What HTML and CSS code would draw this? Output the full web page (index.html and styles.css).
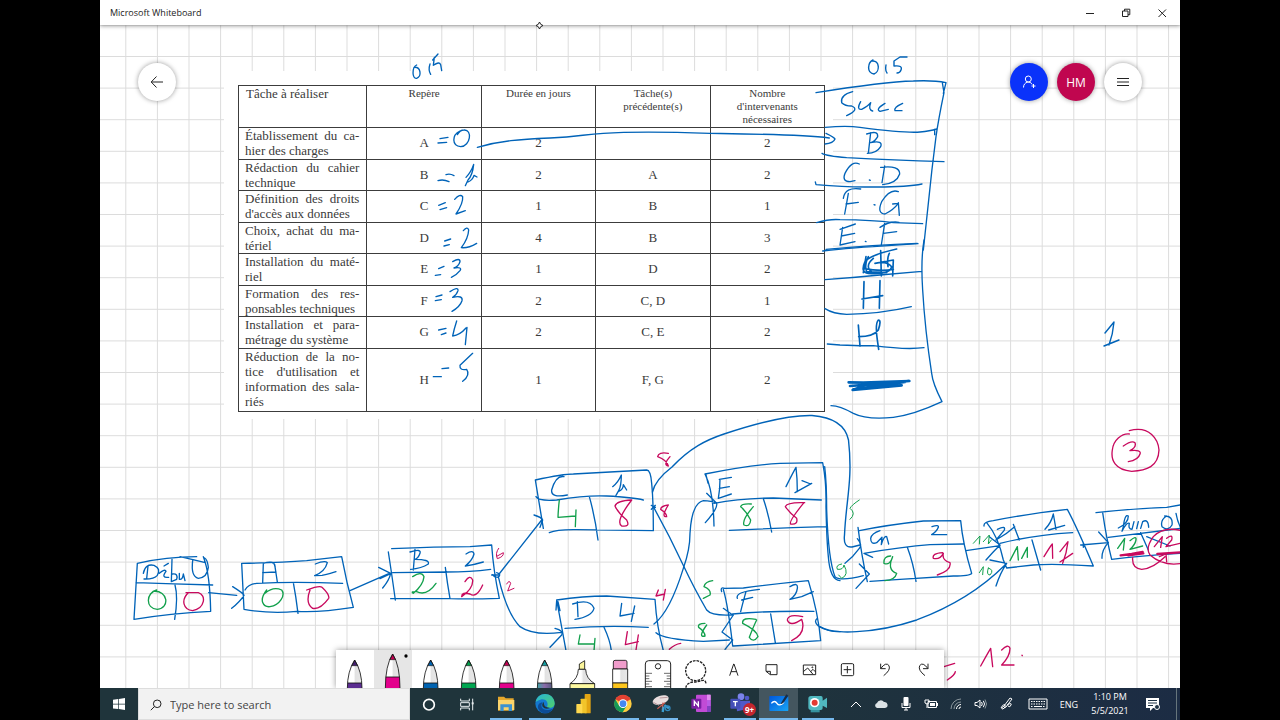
FILE: index.html
```html
<!DOCTYPE html>
<html lang="fr">
<head>
<meta charset="utf-8">
<title>Microsoft Whiteboard</title>
<link rel="stylesheet" href="styles.css">
</head>
<body>
<div class="desktop">
<header class="titlebar">
  <span class="app-name">Microsoft Whiteboard</span>
  <div class="window-controls">
    <button class="window-button" aria-label="Minimize"><svg width="10" height="10" viewBox="0 0 10 10"><path d="M1 5.5h8"/></svg></button>
    <button class="window-button" aria-label="Restore"><svg width="10" height="10" viewBox="0 0 10 10"><path d="M1.5 3h5.500v5.500h-5.500zM3.500 3V1.200h5.300v5.500H7"/></svg></button>
    <button class="window-button" aria-label="Close"><svg width="10" height="10" viewBox="0 0 10 10"><path d="M1.500 1.500l7.500 7.500M9 1.500L1.500 9"/></svg></button>
  </div>
</header>

<main class="board">
  <svg class="grid" aria-hidden="true">
    <defs><pattern id="cell" x="25.300" y="31" width="31.600" height="31.600" patternUnits="userSpaceOnUse"><path d="M.5 0V31.600M0 .5H31.600" stroke="#dcdcdc" fill="none"/></pattern></defs>
    <rect width="100%" height="100%" fill="url(#cell)"/>
  </svg>

  <div class="sheet">
    <table class="tasks">
      <thead>
        <tr><th class="first">Tâche à réaliser</th><th>Repère</th><th>Durée en jours</th><th>Tâche(s)<br>précédente(s)</th><th>Nombre<br>d'intervenants<br>nécessaires</th></tr>
      </thead>
      <tbody>
        <tr><td><span class="full">Établissement du ca-</span><span>hier des charges</span></td><td>A</td><td>2</td><td></td><td>2</td></tr>
        <tr><td><span class="full">Rédaction du cahier</span><span>technique</span></td><td>B</td><td>2</td><td>A</td><td>2</td></tr>
        <tr><td><span class="full">Définition des droits</span><span>d'accès aux données</span></td><td>C</td><td>1</td><td>B</td><td>1</td></tr>
        <tr><td><span class="full">Choix, achat du ma-</span><span>tériel</span></td><td>D</td><td>4</td><td>B</td><td>3</td></tr>
        <tr><td><span class="full">Installation du maté-</span><span>riel</span></td><td>E</td><td>1</td><td>D</td><td>2</td></tr>
        <tr><td><span class="full">Formation des res-</span><span>ponsables techniques</span></td><td>F</td><td>2</td><td>C, D</td><td>1</td></tr>
        <tr><td><span class="full">Installation et para-</span><span>métrage du système</span></td><td>G</td><td>2</td><td>C, E</td><td>2</td></tr>
        <tr class="tall"><td><span class="full">Réduction de la no-</span><span class="full">tice d'utilisation et</span><span class="full">information des sala-</span><span>riés</span></td><td>H</td><td>1</td><td>F, G</td><td>2</td></tr>
      </tbody>
    </table>
  </div>

  <svg class="ink" width="1080" height="663" viewBox="100 25 1080 663" role="img" aria-label="Notes manuscrites et diagramme PERT">
    <g class="page">
      <path d="M873 60C868 62 866 73 874 74C880 72 880 60 872 61M886 65q-1 6 1 8M907 57h-7l-6 4v5q9-1 7 4q-1 3-4 3M1105 333L1114 322Q1113 334 1109 345M1104 346L1119 340"/>
      <path d="M652.500 492Q655 480 672 467C690 448 706 440 724 434C760 422 790 415 812 415.500Q844 418 848.500 440C853 480 846 500 844.500 535Q843 548 852 547L860 545"/>
    </g>
    <g transform="translate(100 0) scale(.33333)">
      <path d="M950 195C935 202 936 238 950 235C965 230 964 200 942 202M990 192Q984 210 992 223M1014 162L998 180M1003 172L1000 196Q1018 183 1022 194L1025 212"/>
    </g>
    <g transform="translate(230 80) scale(.33333)">
      <path d="M630 176L654 172M624 189L650 187M690 153C665 165 665 198 692 200C722 198 728 148 702 150Q690 150 682 164M624 302Q640 297 657 305M648 284Q660 280 672 287M708 292Q724 275 731 253Q728 285 714 300L706 317M714 306Q728 300 732 286L741 291"/>
      <path d="M626 376L646 368M630 389L650 383M674 358Q690 340 698 350Q700 370 678 402L706 392M644 483L662 477M642 498L658 494M700 452Q712 438 716 450Q715 475 694 503Q715 505 740 490"/>
    </g>
    <g transform="translate(230 240) scale(.33333)">
      <path d="M626 86L642 79M616 106L632 104M668 65Q690 52 690 65Q685 80 672 84Q698 80 690 92Q680 105 664 112M618 170L636 165M616 182L634 179M660 155Q685 138 684 152Q680 165 668 172Q700 165 696 182Q690 200 666 214"/>
      <path d="M626 270L648 265M634 284L648 279M680 243Q672 268 668 288Q690 285 708 264M711 262L706 314M636 386L656 384M610 410L634 410M728 340L690 376Q688 392 710 388Q722 405 698 424"/>
    </g>
    <g transform="translate(540 70) scale(.33333)">
      <path d="M-188 232C-120 212-60 208 30 204S130 193 190 190C300 183 450 188 510 190C650 192 780 193 868 204M858 190Q880 200 885 207Q880 220 855 222"/>
      <path d="M828 68C940 50 1040 35 1120 33Q1180 30 1218 38L1210 70M1207 38L1212 68Q1195 150 1188 200Q1175 300 1165 400L1150 540M856 172Q920 166 960 172Q1100 190 1140 186Q1170 183 1190 177M1184 178v16M846 250Q860 258 920 263Q1060 270 1212 275M826 336L828 344Q920 352 990 351Q1100 352 1146 342M830 458Q870 446 900 449Q1000 450 1060 458L1148 461M858 538Q1000 525 1132 520"/>
      <path d="M938 65Q900 75 905 98Q915 108 935 108Q960 118 920 137M962 95Q948 120 965 118Q985 108 992 98Q984 120 998 123M1035 100Q1005 118 1020 124L1045 118M1088 100Q1060 112 1065 122L1086 122M992 188L985 250M980 192Q1015 180 1013 200Q1005 215 992 218Q1030 210 1022 230Q1010 250 982 250"/>
      <path d="M958 282Q935 270 915 310Q905 335 930 335L945 332M988 330l3 1M1034 288L1026 338M1022 292Q1080 285 1079 312Q1070 340 1028 344M925 370Q920 400 914 432M910 385Q915 350 962 357M918 402L955 397M1002 404l3 1M1075 365Q1050 355 1025 395Q1010 430 1035 432Q1060 420 1075 400L1058 402M1075 398L1078 436"/>
      <path d="M908 472L900 525L945 515M900 478L946 462M904 498L944 490M976 514l2 1M1034 460L1024 525M1020 472Q1050 452 1077 457M1030 490L1070 485"/>
    </g>
    <g transform="translate(540 240) scale(.33333)">
      <path d="M1152 0Q1142 60 1148 150Q1155 270 1175 400Q1178 430 1206 485Q1120 525 1060 532Q980 540 940 520Q900 498 873 497M848 33Q950 22 1000 20L1134 11M855 119Q940 113 1020 105L1146 94M855 206Q880 222 920 223Q1020 222 1114 200M862 312L900 315Q960 318 1000 317Q1100 330 1152 323"/>
      <path class="bold" d="M1070 27Q990 45 975 65Q960 98 985 100Q1050 105 1055 80Q1040 62 1005 70L1060 60L1058 108M985 50Q972 75 980 95L1040 98M1022 32L1024 108M1000 55Q970 80 1000 100M970 85Q1020 95 1060 88M978 50L970 98M1048 40Q1040 55 1044 80M972 125L970 205M1020 122L1018 205M966 177L1028 167M955 255L960 318M956 290Q1000 290 1015 270Q1025 240 1015 240Q1005 250 1012 300L1016 328"/>
      <path class="scribble" d="M926 427L970 428L1108 423L930 438L1095 426L940 448L1085 436L938 450L980 434"/>
    </g>
    <g transform="translate(120 530) scale(.33333)">
      <path d="M52 100Q140 80 230 80M42 268L52 100M180 80Q215 88 256 98M42 268Q150 250 272 244M250 80Q270 130 272 244M48 158Q160 162 278 165M165 165Q175 200 164 268M84 108L80 146M70 130Q76 100 102 106Q124 116 112 136Q102 148 72 147M118 130Q135 115 138 124Q122 145 146 142M132 108L145 100M156 88L154 155M158 132Q175 130 170 148L154 155M178 130L178 148Q188 150 190 132L195 152M218 92Q212 140 235 145Q262 142 265 112Q262 88 254 84"/>
      <path d="M266 188L350 196M338 170Q370 190 372 196Q360 215 335 235M365 100Q480 98 560 92Q620 85 665 80Q680 160 700 232Q600 248 530 244Q450 252 372 238L365 100M375 180Q385 162 410 160Q520 154 668 160M520 158Q528 200 534 250M428 158L430 100Q465 90 465 110L472 156M428 128L468 126M586 102Q615 90 622 98Q615 125 584 137L606 136Q635 130 648 125"/>
      <path d="M690 182L808 130M776 112L812 130Q808 150 788 174M780 146L810 132M815 56Q950 50 1050 50L1115 45Q1120 120 1138 205Q1050 208 990 206L812 206M805 66Q815 130 826 210M818 128L980 126Q1050 126 1112 118M976 112Q982 160 990 206M870 66Q905 55 900 70Q895 85 885 88Q930 88 925 102Q905 115 872 118M885 58L880 120M1038 72Q1060 58 1062 72Q1058 90 1036 108Q1060 105 1090 96"/>
      <path class="green" d="M110 180C78 188 75 235 112 238C150 235 145 180 100 184M440 180C415 212 430 232 450 230C480 225 497 195 485 180Q460 168 435 190M878 140Q905 122 912 140Q910 165 880 190Q870 184 890 185Q920 200 948 160"/>
      <path class="pink" d="M205 188C182 210 190 240 218 242C255 235 260 195 235 188L198 188M560 180Q600 165 606 172Q630 195 626 205Q600 240 578 235Q555 220 570 180M1035 155Q1050 132 1058 150Q1060 175 1025 200Q1025 185 1050 192Q1070 205 1088 165"/>
      <path class="pink thin" d="M1136 55Q1125 70 1132 86Q1152 80 1150 68L1132 78M1160 162Q1168 148 1172 160L1163 183L1182 175"/>
    </g>
    <g transform="translate(490 440) scale(.33333)">
      <path d="M5 405L28 405M20 398Q35 402 25 412Q12 412 8 404M25 405L155 240M132 225Q155 232 158 240L150 262M25 410Q50 520 90 560Q130 588 215 577M195 565Q222 572 215 585L180 622"/>
      <path d="M136 120Q220 102 250 102L470 90Q482 90 485 130Q490 180 490 272Q350 270 260 269Q200 268 178 278M136 120L160 265M138 170Q145 184 200 180Q290 165 350 168Q430 172 460 180M298 170Q315 230 324 300M222 110Q198 105 185 150Q182 175 232 165M368 140Q384 128 394 105Q394 138 386 152L378 166M386 154Q400 148 400 134L410 150"/>
      <path d="M490 200Q540 290 582 380Q610 440 650 510Q665 528 725 525M484 196L496 202M484 208L496 196M200 480Q280 468 350 468L495 478Q500 560 520 632M200 480Q215 560 228 632M200 482L198 510M204 485L210 512M225 565Q350 555 475 562M342 562Q360 600 364 632M262 485L264 530M248 492Q300 475 312 505Q305 530 255 538M395 490L390 528L432 520M434 498L424 544"/>
      <path d="M492 552Q540 515 580 385Q600 330 600 280Q605 190 640 182Q665 183 680 190M650 160L680 190Q684 205 646 248M498 578Q520 598 640 604L718 600M730 525L696 576L728 600L705 628M645 102Q780 75 870 70L998 68Q1010 130 1008 200Q1010 300 1015 350Q1020 420 1050 422M645 102Q670 150 672 258M648 105l6 24M718 271Q850 265 1008 260M672 190Q750 175 850 174L994 180M820 176Q835 220 845 276M690 118Q690 150 685 175L724 162M688 118L724 112M688 145L718 140M888 140Q905 105 918 82Q922 115 922 155M915 158L965 130M936 122L962 132"/>
      <path d="M695 455Q690 440 704 445L760 444Q850 432 955 422Q985 520 992 602L730 618M700 448Q715 500 728 618M728 522Q830 512 972 514M842 522L856 608M768 455Q758 490 752 515M742 475Q735 455 808 448M755 480L788 472M900 440Q925 425 922 445Q920 465 900 478L935 470L970 455M700 505L728 525M982 535Q970 545 985 558Q1010 575 1050 575"/>
      <path class="green" d="M208 180Q205 205 204 232L256 228M258 210L256 260M270 585L265 612L312 612M315 595L312 632M784 192Q755 190 752 200Q770 215 782 240Q780 262 762 255Q755 240 790 200M668 422Q645 425 642 440Q665 450 660 465L640 475M645 550Q622 550 626 562Q645 575 645 588Q622 594 650 555M798 538Q755 530 758 550Q800 570 804 590Q790 610 778 592Q790 560 800 540"/>
      <path class="pink" d="M425 180Q380 182 375 198Q385 220 410 240Q422 262 395 258Q375 245 425 180M412 575L406 614L445 605M445 585L438 630M535 40Q505 35 503 50Q530 60 535 78Q518 75 540 50M535 195Q512 198 512 208Q530 220 530 230Q512 232 535 195M505 450L498 468L524 462M526 448L520 480M538 628Q555 612 572 610M944 188Q890 186 886 200Q900 220 920 235Q925 255 902 252Q895 245 942 188M938 530Q895 520 892 540Q900 562 935 538Q950 580 905 602"/>
    </g>
    <g transform="translate(820 410) scale(.33333)">
      <path d="M14 170Q20 220 20 300Q25 450 45 500Q60 515 130 497M118 462L148 492L108 535M112 386Q128 405 118 415Q100 440 75 460M118 362Q200 345 310 333L422 332Q428 400 455 490Q450 498 400 498L240 508L150 514M114 352Q125 440 142 515M132 430Q250 410 330 404L430 402M132 430L158 442M262 412Q280 460 288 514M180 362Q155 370 152 385Q152 405 170 398L186 382L184 404Q192 376 200 380L206 402M336 350Q357 343 355 352Q350 365 335 374L380 374"/>
      <path d="M60 665Q80 667 110 665Q200 660 290 630Q450 570 555 465M0 650Q24 664 60 665M510 450L560 460Q540 490 528 528M438 422L540 407M508 380L540 405Q515 430 498 450M492 348Q490 335 520 332Q620 312 742 298Q770 350 820 468Q700 460 640 465L560 474M500 338Q535 380 550 450L560 474M540 400Q640 375 758 368M636 390L662 480M532 358Q560 345 552 362L528 390Q560 372 584 350M580 343Q590 370 598 390M675 358Q694 338 700 312L708 358M686 360L734 346M782 405L865 398M790 400v12M836 366L865 398Q845 420 846 445"/>
      <path d="M828 308Q950 295 1040 292L1085 284M848 308Q860 390 875 448Q960 438 1085 430M865 382Q960 370 1085 355M962 368L985 420M980 380L1050 408M895 354Q925 340 925 318Q915 310 910 350L906 364Q920 335 928 340Q924 358 936 358L942 335M950 356L955 335M962 355L968 335Q985 325 986 352M1040 318Q1020 330 1026 350Q1045 365 1056 345Q1060 318 1034 318M1068 310Q1072 335 1085 360"/>
      <path class="green thin" d="M65 462Q46 465 52 478Q70 480 72 465Q88 495 65 505L56 495M118 270Q95 285 90 295Q110 310 90 328M460 400L480 378L478 402M490 395L508 375L505 402L514 390M478 488L490 470L488 494M505 474Q498 495 510 495Q524 480 505 474"/>
      <path class="green" d="M212 438Q190 438 192 460Q210 468 218 440Q200 480 230 490Q225 510 195 512M570 452L592 410L595 450M605 445L622 412L622 442M893 415L914 385L910 420M930 392Q950 375 948 390Q945 405 930 418L968 408"/>
      <path class="pink" d="M368 428Q335 430 340 445Q360 450 370 430Q365 450 390 458Q395 480 352 495M672 440Q690 410 697 402L698 445M720 425L744 395Q740 430 728 460M720 456L758 430M1003 410L1027 380L1022 412M1040 385Q1060 370 1055 390L1038 410L1080 400M1085 362Q1030 348 1000 380Q975 415 990 435Q1030 470 1085 460M938 442Q935 475 965 478Q1000 475 1035 440M1018 440L1038 432L1040 455M928 62C990 45 1015 90 1017 120C1015 170 980 182 935 184C885 180 872 150 877 120C880 90 905 70 928 72M910 108Q935 90 945 98Q950 112 930 122Q965 118 960 132Q955 150 925 155M482 768Q500 735 512 715L518 770M545 720Q565 700 570 715Q570 740 545 765L582 765M606 736l1 1M372 770L404 760M382 810Q405 795 406 785"/>
      <path class="pink heavy" d="M902 436L935 432L968 426M925 436L970 430M1012 432L1085 427"/>
    </g>
  </svg>

  <div class="top-actions">
    <button class="round" aria-label="Back"><svg width="14" height="14" viewBox="0 0 14 14"><path d="M13 7H1.500M6.500 1.500L1.200 7l5.300 5.500"/></svg></button>
    <div class="account">
      <button class="round invite" aria-label="Invite"><svg width="14" height="14" viewBox="0 0 14 14"><circle cx="6.300" cy="4" r="3"/><path d="M1.500 12.500c0-6 7-7 8.700-3M9.500 11h4M11.500 9v4"/></svg></button>
      <button class="round user">HM</button>
      <button class="round" aria-label="Menu"><svg width="14" height="10" viewBox="0 0 14 10"><path d="M1 1.500h12M1 5h12M1 8.500h12"/></svg></button>
    </div>
  </div>

  <svg width="0" height="0" class="defs" aria-hidden="true">
    <defs>
      <linearGradient id="barrel"><stop offset="0" stop-color="#fff"/><stop offset=".45" stop-color="#fff"/><stop offset=".55" stop-color="#e2e2e2"/><stop offset="1" stop-color="#e8e8e8"/></linearGradient>
      <linearGradient id="galaxy"><stop offset="0" stop-color="#3fa3a6"/><stop offset=".5" stop-color="#8b6aa8"/><stop offset="1" stop-color="#545a80"/></linearGradient>
      <symbol id="pen" viewBox="0 0 114 114">
        <path d="M56 30Q34 64 34 114H78Q78 64 56 30Z" fill="url(#barrel)"/>
        <path class="band" d="M35 99H77L78 116H34Z"/>
        <path class="tip" d="M56 30L47 47H65Z"/>
        <path d="M56 30Q34 64 34 116M78 116Q78 64 56 30M35 99H77" fill="none" stroke="#111" stroke-width="2.500"/>
      </symbol>
    </defs>
  </svg>

  <div class="toolbar" role="toolbar" aria-label="Drawing tools">
    <button class="tool violet" aria-label="Purple pen"><svg viewBox="0 0 114 114"><use href="#pen"/></svg></button>
    <button class="tool magenta active" aria-label="Pink pen"><svg viewBox="0 0 114 114"><path d="M56 12Q34 46 34 114H78Q78 46 56 12Z" fill="url(#barrel)"/><path class="band" d="M35 81H77L78 116H34Z"/><path class="tip" d="M56 12L47 29H65Z"/><path d="M56 12Q34 46 34 116M78 116Q78 46 56 12M35 81H77" fill="none" stroke="#111" stroke-width="2.500"/><circle cx="96" cy="18" r="5"/></svg></button>
    <button class="tool azure" aria-label="Blue pen"><svg viewBox="0 0 114 114"><use href="#pen"/></svg></button>
    <button class="tool leaf" aria-label="Green pen"><svg viewBox="0 0 114 114"><use href="#pen"/></svg></button>
    <button class="tool magenta" aria-label="Red pen"><svg viewBox="0 0 114 114"><use href="#pen"/></svg></button>
    <button class="tool cosmic" aria-label="Galaxy pen"><svg viewBox="0 0 114 114"><use href="#pen"/></svg></button>
    <button class="tool" aria-label="Highlighter"><svg viewBox="0 0 114 114" stroke="#111" stroke-width="2.500"><path d="M46 58V42L62 32V58Z" fill="#fbf59b"/><path d="M43 58H65Q66 86 92 101H18Q42 86 43 58Z" fill="url(#barrel)"/><path d="M18 101H92V118H18Z" fill="#fdf9a0"/></svg></button>
    <button class="tool" aria-label="Eraser"><svg viewBox="0 0 114 114" stroke="#111" stroke-width="2.500"><path d="M34 57V36Q34 31 39 31H70Q75 31 75 36V57Z" fill="#f09ccb"/><path d="M32 57H77V99H32Z" fill="url(#barrel)"/><path d="M32 99H77V118H32Z" fill="#fdc61c"/></svg></button>
    <button class="tool" aria-label="Ruler"><svg viewBox="0 0 114 114" fill="none" stroke="#222" stroke-width="3"><path d="M16 118V42Q16 32 26 32H82Q92 32 92 42V118"/><circle cx="54" cy="49" r="8"/><path d="M16 70H36M16 78H28M16 86H28M16 94H36M16 102H28M16 110H36M92 70H72M92 78H80M92 86H80M92 94H72M92 102H80M92 110H72" stroke-width="2"/></svg></button>
    <button class="tool" aria-label="Lasso"><svg viewBox="0 0 114 114" fill="none" stroke="#222" stroke-width="4" stroke-dasharray="8 3"><circle cx="53" cy="62" r="30"/><path d="M84 100Q82 88 70 92T45 96Q22 100 24 116"/></svg></button>
    <button class="tool" aria-label="Text"><svg viewBox="0 0 114 114" fill="none" stroke="#222" stroke-width="3"><path d="M41 77L53 42H54L66 77M45 65H62"/></svg></button>
    <button class="tool" aria-label="Note"><svg viewBox="0 0 114 114" fill="none" stroke="#222" stroke-width="3"><path d="M36 44H69V74H49L36 64ZM49 74V64H36"/></svg></button>
    <button class="tool" aria-label="Image"><svg viewBox="0 0 114 114" fill="none" stroke="#222" stroke-width="3"><path d="M34 45H71V74H34ZM34 65L47 54L63 73M56 65L63 58L71 66"/><circle cx="61" cy="52" r="1.500"/></svg></button>
    <button class="tool" aria-label="Insert"><svg viewBox="0 0 114 114" fill="none" stroke="#222" stroke-width="3"><rect x="34" y="41" width="37" height="36" rx="4"/><path d="M52 48V70M41 59H64"/></svg></button>
    <button class="tool" aria-label="Undo"><svg viewBox="0 0 114 114" fill="none" stroke="#222" stroke-width="3"><path d="M38 41V56H53M38 56Q54 34 63 47Q69 60 47 77"/></svg></button>
    <button class="tool" aria-label="Redo"><svg viewBox="0 0 114 114" fill="none" stroke="#222" stroke-width="3"><path d="M66 41V56H51M66 56Q50 34 41 47Q35 60 57 77"/></svg></button>
  </div>
</main>

<footer class="taskbar">
  <button class="start" aria-label="Start"><svg width="12" height="12" viewBox="0 0 12 12" fill="#fff"><path d="M0 1.700L5.200 1v4.700H0zM5.900.9L12 0v5.700H5.900zM0 6.400h5.200v4.700L0 10.400zM5.900 6.400H12V12l-6.100-.9z"/></svg></button>
  <label class="search"><svg width="12" height="12" viewBox="0 0 12 12" fill="none" stroke="#222"><circle cx="7.200" cy="4.800" r="3.800"/><path d="M4.500 7.500L.8 11.200"/></svg><input type="text" placeholder="Type here to search" aria-label="Type here to search"></label>
  <button class="task plain" aria-label="Cortana"><svg viewBox="0 0 114 96"><circle cx="57" cy="50" r="16" fill="none" stroke="#fff" stroke-width="5"/></svg></button>
  <button class="task plain" aria-label="Task view"><svg viewBox="0 0 114 96" fill="none" stroke="#e8eef0" stroke-width="3"><path d="M38 32V39H64V32M38 67V60H64V67M38 44H64V55H38ZM74 32V67"/><path d="M71 46h6" stroke-width="6"/></svg></button>
  <nav class="apps" aria-label="Applications">
    <button class="task running" aria-label="File Explorer"><svg viewBox="0 0 114 96"><path d="M33 26H51L56 31H80V68H33Z" fill="#e5a72c"/><path d="M33 36H82V66H33Z" fill="#fbd56c"/><path d="M40 49H75V69H65V58H50V69H40Z" fill="#3c92d0"/></svg></button>
    <button class="task running" aria-label="Edge"><svg viewBox="0 0 114 96"><defs><linearGradient id="sea" x2="1" y2="1"><stop offset="0" stop-color="#28b5d8"/><stop offset="1" stop-color="#4fcf6b"/></linearGradient></defs><circle cx="57" cy="47" r="29" fill="#1478cf"/><path d="M29 42C34 8 84 10 86 46C86 60 71 62 63 57C70 42 57 30 43 35C36 37 31 40 29 42Z" fill="url(#sea)"/><path d="M50 43C39 58 53 73 81 62C70 80 49 80 39 66C31 54 40 43 50 43Z" fill="#0d4c97"/><path d="M54 42Q50 58 72 60Q58 66 50 56Q46 47 54 42Z" fill="#1f343b"/></svg></button>
    <button class="task" aria-label="Power BI"><svg viewBox="0 0 114 96"><rect x="59" y="18" width="18" height="58" rx="2" fill="#e3a513"/><rect x="47" y="32" width="18" height="44" rx="2" fill="#f2c52b"/><rect x="34" y="48" width="18" height="28" rx="2" fill="#ffd94f"/></svg></button>
    <button class="task running" aria-label="Chrome"><svg viewBox="0 0 114 96"><circle cx="57" cy="47" r="26" fill="#ffcd40"/><path d="M57 47L34 34A26 26 0 0 1 80 34Z" fill="#e34132"/><path d="M34 34A26 26 0 0 0 56 73L68 53L46 54Z" fill="#159957"/><circle cx="57" cy="47" r="13" fill="#fff"/><circle cx="57" cy="47" r="10" fill="#4688f1"/></svg></button>
    <button class="task running" aria-label="Snip"><svg viewBox="0 0 114 96"><ellipse cx="53" cy="36" rx="25" ry="13" fill="#eadede" transform="rotate(-18 53 36)"/><path d="M31 43L48 52M50 30L74 28" stroke="#b9999d" stroke-width="3"/><path d="M43 62L66 44M60 44L58 66" stroke="#c55a50" stroke-width="4"/><path d="M64 52L78 61M62 56L59 72" stroke="#3d9fd1" stroke-width="7" fill="none"/><circle cx="74" cy="61" r="7" fill="none" stroke="#3389be" stroke-width="4"/></svg></button>
    <button class="task" aria-label="OneNote"><svg viewBox="0 0 114 96"><rect x="42" y="20" width="44" height="52" rx="3" fill="#c14bd6"/><path d="M75 20h11v17H75z" fill="#e28df0"/><path d="M75 37h11v17H75z" fill="#b95be4"/><path d="M75 54h11v18H75z" fill="#8441c2"/><rect x="28" y="32" width="30" height="30" rx="3" fill="#7a1fa2"/><path d="M37 54V40L49 54V40" fill="none" stroke="#fff" stroke-width="4"/></svg></button>
    <button class="task running" aria-label="Teams"><svg viewBox="0 0 114 96"><circle cx="60" cy="26" r="10" fill="#7b83eb"/><circle cx="78" cy="30" r="7" fill="#5059c9"/><path d="M45 38H87V60Q80 72 70 65L48 70Z" fill="#5059c9"/><rect x="28" y="32" width="30" height="30" rx="3" fill="#4550b8"/><path d="M36 41H50M43 41V55" stroke="#fff" stroke-width="4"/></svg><span class="badge">9+</span></button>
    <button class="task running current" aria-label="Whiteboard"><svg viewBox="0 0 114 96"><defs><linearGradient id="board" x2="1" y2="1"><stop offset="0" stop-color="#0057dc"/><stop offset="1" stop-color="#18a5f5"/></linearGradient></defs><rect x="28" y="24" width="57" height="45" rx="2" fill="url(#board)"/><path d="M34 46Q44 35 51 46T72 43" fill="none" stroke="#fff" stroke-width="4"/><path d="M63 45L79 19L85 23L70 45L62 49Z" fill="#172d49"/></svg></button>
    <button class="task running" aria-label="Recorder"><svg viewBox="0 0 114 96"><path d="M28 32Q28 24 36 24H66Q71 24 71 30V38L84 29V60L71 53V60Q71 66 65 66H36Q28 66 28 58Z" fill="#50b8c0"/><path d="M35 66H62V73H35Z" fill="#3693a0"/><circle cx="47" cy="44" r="14" fill="#fff"/><circle cx="47" cy="44" r="9" fill="#e23a32"/></svg></button>
  </nav>
  <div class="tray">
    <button class="tray-item" aria-label="Hidden icons"><svg width="12" height="8" viewBox="0 0 12 8"><path class="line" d="M1 7l5-5 5 5"/></svg></button>
    <button class="tray-item" aria-label="OneDrive"><svg width="14" height="10" viewBox="0 0 14 10"><path d="M3 9a2.600 2.600 0 0 1 0-5A4 4 0 0 1 10 3a3 3 0 0 1 1 6z" fill="#dce3e6"/></svg></button>
    <button class="tray-item" aria-label="Microphone"><svg width="10" height="14" viewBox="0 0 10 14"><rect x="2.500" y="0" width="5" height="9" rx="1" fill="#fff"/><path class="line" d="M1 6v4.500h8V6M5 10v3M3 13h4"/></svg></button>
    <button class="tray-item" aria-label="Battery"><svg width="14" height="12" viewBox="0 0 14 12"><path class="line" d="M4 3.500h8.500v6H4zM1 2h4v3L3 6 1 5zM3 6v4M13.500 5v3"/><path d="M6 5h5v3H6z" fill="#fff"/></svg></button>
    <button class="tray-item" aria-label="Wi-Fi"><svg width="12" height="12" viewBox="0 0 12 12"><path class="line dim" d="M1 11A10 10 0 0 1 11 1M4 11A7 7 0 0 1 11 4"/><path class="line" d="M6.500 11A4.500 4.500 0 0 1 11 6.500M9 11a2 2 0 0 1 2-2"/></svg></button>
    <button class="tray-item" aria-label="Volume"><svg width="13" height="12" viewBox="0 0 13 12"><path class="line" d="M1 4.500h2L6 2v8L3 7.500H1zM7.500 4q1.500 2 0 4M9.300 2.800q2.500 3.200 0 6.400"/><path class="line dim" d="M11 1.500q3 4.500 0 9"/></svg></button>
    <button class="tray-item pen-item" aria-label="Pen"><svg width="14" height="14" viewBox="0 0 14 14"><path class="line" d="M1 11q3-5 4-3t-2 4q-3 0 1-3l6-8 2 1-6 8-2 1M7 8q5-3 4 0T8 9"/></svg></button>
    <button class="tray-item keyboard" aria-label="Keyboard"><svg width="20" height="12" viewBox="0 0 20 12"><path class="line" d="M1 1h18v10H1z"/><path class="line" stroke-dasharray="1.500 1" d="M3 3.500h14M3 6h14M3 8.500h2M15 8.500h2"/><path class="line" d="M6 8.500h8"/></svg></button>
    <button class="tray-item language">ENG</button>
    <button class="clock"><span>1:10 PM</span><span>5/5/2021</span></button>
    <button class="tray-item notices" aria-label="Notifications"><svg width="14" height="14" viewBox="0 0 14 14"><path d="M0 1h13v10H7l-3 3v-3H0z" fill="#fff"/><path d="M2 3.500h9M2 6h9M2 8.500h5" stroke="#1f3344"/><circle cx="11" cy="10" r="2.500" fill="#1f3344" stroke="#fff"/></svg></button>
  </div>
</footer>
<svg class="cursor" width="9" height="9" viewBox="0 0 9 9" aria-hidden="true"><path d="M4.500 1l1.200 2.300L8 4.500 5.700 5.700 4.500 8 3.300 5.700 1 4.500l2.300-1.200z"/></svg>
</div>
</body>
</html>
```
FILE: styles.css
```css
* { box-sizing: border-box; }
body { margin: 0; background: #000; font-family: "Open Sans", "Noto Sans", sans-serif; }
button { border: 0; padding: 0; background: none; font: inherit; color: inherit; display: flex; align-items: center; justify-content: center; }
.desktop { position: relative; height: 100vh; margin: 0 100px; display: flex; flex-direction: column; overflow: hidden; background: #fff; }

.titlebar { position: relative; z-index: 1; height: 25px; flex: none; display: flex; align-items: center; justify-content: space-between; padding-left: 10px; background: #fff; box-shadow: 0 1px 4px rgba(0, 0, 0, .4); }
.app-name { font-size: 9px; line-height: 16px; color: #222; }
.window-controls { display: flex; }
.window-button { width: 36px; height: 25px; }
.window-button svg { fill: none; stroke: #222; }

.board { position: relative; flex: 1; min-height: 0; overflow: hidden; display: flex; flex-direction: column; justify-content: space-between; }
.grid { position: absolute; inset: 0; width: 100%; height: 100%; }
.defs { position: absolute; }

/* Pasted picture lying on the free canvas */
.sheet { position: absolute; left: 124px; top: 46px; padding: 14px 8px 7px 14px; background: #fff; }
.tasks { width: 587px; table-layout: fixed; border-collapse: collapse; font-family: "Liberation Serif", serif; font-size: 13px; line-height: 15px; color: #3a3a3a; }
.tasks th, .tasks td { border: 1px solid #3c3c3c; padding: 0 0 2px; text-align: center; vertical-align: middle; }
.tasks th { width: 114px; height: 42px; vertical-align: top; font-size: 11px; line-height: 13px; font-weight: 400; padding: 1px 0 0; }
.tasks th.first { width: 128px; font-size: 13px; text-align: left; padding-left: 7px; }
.tasks td { height: 32px; }
.tasks tr:nth-child(even) td { height: 31px; }
.tasks .tall td:first-child, .tasks .tall td { height: 63px; }
.tasks td:first-child { text-align: left; vertical-align: top; padding: 0 7px 0 6px; }
.tasks td span { display: block; white-space: nowrap; }
.tasks .full { text-align: justify; text-align-last: justify; }

.ink { position: absolute; left: 0; top: 0; fill: none; stroke: #0063b8; stroke-width: 4; stroke-linecap: round; stroke-linejoin: round; }
.ink .page { stroke-width: 1.400; }
.cursor { position: absolute; left: 435px; top: 21px; z-index: 2; fill: #fff; stroke: #222; }
.ink .bold { stroke-width: 5; }
.ink .scribble { stroke-width: 8; }
.ink .green { stroke: #12a04c; }
.ink .pink { stroke: #c80a5e; }
.ink .thin { stroke-width: 3; }
.ink .heavy { stroke-width: 7; }

.top-actions { position: relative; display: flex; justify-content: space-between; padding: 38px 38px 0; }
.account { display: flex; gap: 9px; }
.round { width: 38px; height: 38px; border-radius: 50%; background: #fff; box-shadow: 0 0 5px rgba(0, 0, 0, .4); font-size: 12px; }
.round svg { fill: none; stroke: #222; }
.round.invite { background: #0a32fa; }
.round.invite svg { stroke: #fff; }
.round.user { background: #c0064f; color: #fff; }

.toolbar { position: relative; align-self: center; display: flex; background: #fff; box-shadow: 0 0 6px rgba(0, 0, 0, .4); }
.tool { width: 38px; height: 38px; }
.tool svg { width: 38px; height: 38px; }
.active { background: #e6e6e6; }
.violet { --ink: #5b2d91; --nib: #44206f; }
.magenta { --ink: #e3008c; --nib: #c30052; }
.azure { --ink: #0063b1; --nib: #0063b1; }
.leaf { --ink: #00a651; --nib: #009e49; }
.cosmic { --ink: url(#galaxy); --nib: #159da0; }
.band { fill: var(--ink); }
.tip { fill: var(--nib); stroke: #222; stroke-width: 2; }

.taskbar { flex: none; height: 32px; display: flex; align-items: stretch; color: #fff; background: linear-gradient(90deg, #1f343b 60%, #1c2c44); }
.start { width: 38px; }
.search { width: 272px; display: flex; align-items: center; gap: 8px; padding: 2px 8px 0 11px; background: #f2f2f2; border: 1px solid #ddd; }
.search input { min-width: 0; flex: 1; border: 0; padding: 0; background: none; font: 11px/16px "Open Sans", sans-serif; color: #444; }
.search input::placeholder { color: #444; opacity: 1; }
.task { position: relative; width: 39px; border-bottom: 2px solid transparent; }
.task svg { width: 38px; height: 32px; flex: none; margin-bottom: -2px; }
.plain { width: 38px; }
.running::after { content: ""; position: absolute; left: 4px; right: 3px; bottom: -2px; height: 2px; background: #76b9ed; }
.current { background: #44565f; }
.current::after { left: 0; right: 0; }
.apps { display: flex; }
.badge { position: absolute; right: 3px; bottom: 2px; width: 13px; height: 13px; border-radius: 50%; background: #c4262e; font-size: 8px; line-height: 13px; font-weight: 700; text-align: center; }
.tray { margin-left: auto; margin-right: 3px; padding-right: 7px; display: flex; border-right: 1px solid #66757c; }
.tray-item { width: 25px; font-size: 9px; }
.tray .line { fill: none; stroke: #fff; }
.tray .dim { stroke: #8b979d; }
.tray .pen-item, .tray .language { width: 28px; }
.tray .keyboard { width: 34px; }
.tray .notices { width: 32px; }
.clock { width: 54px; flex-direction: column; font-size: 9px; line-height: 14px; }
```
